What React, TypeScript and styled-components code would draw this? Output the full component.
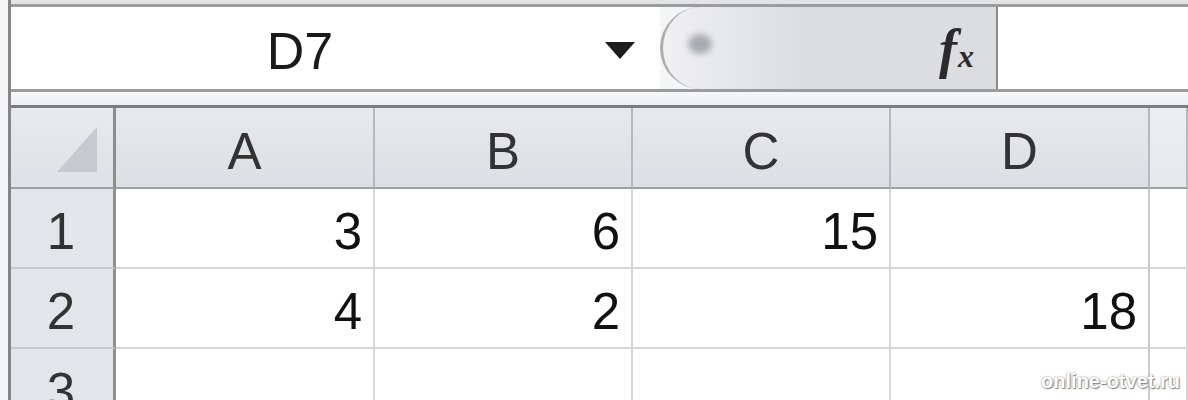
import React from "react";
import styled, { createGlobalStyle } from "styled-components";

const GlobalStyle = createGlobalStyle`
  html, body {
    margin: 0;
    padding: 0;
    background: #f4f5f6;
    overflow: hidden;
  }
`;

const Frame = styled.div`
  position: relative;
  width: 1188px;
  height: 400px;
  box-sizing: border-box;
  padding-left: 8px;
  overflow: hidden;
  background: #f4f5f6;
  font-family: "Liberation Sans", Arial, sans-serif;
`;

const Window = styled.div`
  height: 100%;
  display: flex;
  flex-direction: column;
  border-left: 3px solid #858585;
`;

const TopStrip = styled.div`
  flex-shrink: 0;
  height: 4px;
  background: #e3e4e5;
`;

const FormulaBar = styled.div`
  flex-shrink: 0;
  height: 88px;
  box-sizing: border-box;
  display: flex;
  border-top: 3px solid #9c9c9c;
  border-bottom: 3px solid #9c9c9c;
`;

const NameBox = styled.div`
  width: 649px;
  display: flex;
  align-items: center;
  background: #fff;
`;

const NameText = styled.div`
  width: 578px;
  padding-top: 6px;
  text-align: center;
  font-size: 52px;
  line-height: 1;
  color: #1a1a1a;
`;

const DropArrow = styled.svg`
  margin-left: 16px;
  width: 30px;
  height: 17px;
  margin-top: 4px;
`;

const FxArea = styled.div`
  width: 338px;
  box-sizing: border-box;
  display: flex;
  align-items: center;
  border-left: 3px solid #adadad;
  border-right: 2px solid #8c8c8c;
  border-radius: 44px 0 0 44px;
  background: linear-gradient(to right, #f0f0f2 0px, #e6e7ea 70px, #dcdde1 140px);
`;

const Knob = styled.div`
  width: 24px;
  height: 20px;
  margin-left: 25px;
  margin-top: -8px;
  border-radius: 50%;
  background: #a9aab1;
  filter: blur(3px);
`;

const FxLabel = styled.div`
  margin-left: auto;
  margin-right: 22px;
  margin-top: 2px;
  font-family: "Liberation Serif", "Times New Roman", serif;
  font-style: italic;
  font-weight: bold;
  color: #2b2b2b;
  line-height: 1;
  white-space: nowrap;
`;

const FxF = styled.span`
  font-size: 54px;
`;

const FxX = styled.span`
  font-size: 32px;
  margin-left: 1px;
`;

const FormulaInput = styled.div`
  flex: 1;
  background: #fff;
`;

const GapStrip = styled.div`
  flex-shrink: 0;
  height: 13px;
  background: linear-gradient(to bottom, #f7f8f9, #eceef1);
`;

const Grid = styled.div`
  flex-shrink: 0;
  display: grid;
  grid-template-columns: 105px 259px 258px 258px 259px 1fr;
  grid-template-rows: 81px 80px 80px 80px;
  border-top: 3px solid #7d7d7d;
`;

const Corner = styled.div`
  display: flex;
  justify-content: flex-end;
  align-items: flex-end;
  padding: 0 16px 15px 0;
  background: linear-gradient(to bottom, #e8eaed, #dee1e5);
  border-right: 3px solid #8d8d8d;
  border-bottom: 2px solid #9da1a7;
`;

const ColHead = styled.div<{ $dim?: boolean }>`
  display: flex;
  align-items: center;
  justify-content: center;
  padding-top: 7px;
  box-sizing: border-box;
  font-size: 51px;
  line-height: 1;
  color: #333;
  background: ${(p) =>
    p.$dim
      ? "linear-gradient(to bottom, #eceef0, #e6e8eb)"
      : "linear-gradient(to bottom, #e7e9ec, #dcdfe3)"};
  border-right: 2px solid #b5b9bf;
  border-bottom: 2px solid #9da1a7;
`;

const RowHead = styled.div`
  display: flex;
  align-items: center;
  justify-content: center;
  padding-top: 6px;
  padding-right: 2px;
  box-sizing: border-box;
  font-size: 51px;
  line-height: 1;
  color: #333;
  background: #e2e5e9;
  border-right: 3px solid #8f8f8f;
  border-bottom: 2px solid #c5c8cd;
`;

const Cell = styled.div<{ $edge?: boolean }>`
  display: flex;
  align-items: center;
  justify-content: flex-end;
  padding: 6px 11px 0 0;
  box-sizing: border-box;
  font-size: 51px;
  line-height: 1;
  color: #111;
  background: #fff;
  border-right: 2px solid ${(p) => (p.$edge ? "#c9c9c9" : "#d6d6d6")};
  border-bottom: 2px solid #d6d6d6;
`;

const Watermark = styled.div`
  position: absolute;
  right: 8px;
  bottom: 7px;
  font-family: "Liberation Sans", Arial, sans-serif;
  font-weight: bold;
  font-size: 20px;
  color: #fff;
  text-shadow: 0 0 2px #7a7a7a, 1px 1px 1px #8a8a8a;
`;

const columns = ["A", "B", "C", "D"];
const rows = [
  ["3", "6", "15", ""],
  ["4", "2", "", "18"],
  ["", "", "", ""],
];

export default function App() {
  return (
    <Frame>
      <GlobalStyle />
      <Window>
        <TopStrip />
        <FormulaBar>
          <NameBox>
            <NameText>D7</NameText>
            <DropArrow viewBox="0 0 30 17">
              <polygon points="0,0 30,0 15,17" fill="#1c1c1c" />
            </DropArrow>
          </NameBox>
          <FxArea>
            <Knob />
            <FxLabel>
              <FxF>f</FxF>
              <FxX>x</FxX>
            </FxLabel>
          </FxArea>
          <FormulaInput />
        </FormulaBar>
        <GapStrip />
        <Grid>
          <Corner>
            <svg width="40" height="45" viewBox="0 0 40 45">
              <polygon points="0,45 40,45 40,0" fill="#c6c9cd" />
            </svg>
          </Corner>
          {columns.map((c) => (
            <ColHead key={c}>{c}</ColHead>
          ))}
          <ColHead $dim />
          {rows.map((row, i) => (
            <React.Fragment key={i}>
              <RowHead>{i + 1}</RowHead>
              {row.map((v, j) => (
                <Cell key={j} $edge={j === 3}>
                  {v}
                </Cell>
              ))}
              <Cell />
            </React.Fragment>
          ))}
        </Grid>
      </Window>
      <Watermark>online-otvet.ru</Watermark>
    </Frame>
  );
}
